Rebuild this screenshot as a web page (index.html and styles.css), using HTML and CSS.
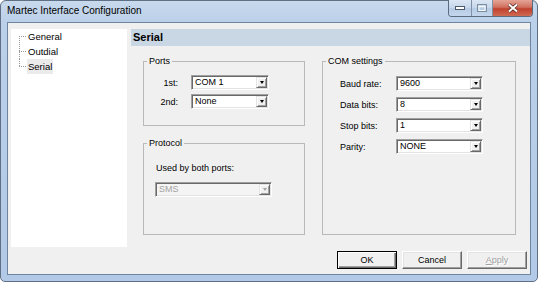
FILE: index.html
```html
<!DOCTYPE html>
<html lang="en">
<head>
    <meta charset="UTF-8">
    <meta name="viewport" content="width=device-width, initial-scale=1.0">
    <title>Martec Interface Configuration</title>
    <link rel="stylesheet" href="styles.css">
</head>
<body>

    <div class="window">
        <div class="titlebar">
            <span class="title">Martec Interface Configuration</span>
            <div class="caption-buttons">
                <div class="cap-btn cap-min">
                    <svg width="10" height="4" viewBox="0 0 10 4"><rect x="0.5" y="0.5" width="9" height="3" fill="#fff" stroke="#4d5a6b"/></svg>
                </div>
                <div class="cap-btn cap-max">
                    <svg width="10" height="8" viewBox="0 0 10 8"><rect x="0.5" y="0.5" width="9" height="7" fill="none" stroke="#7d8da2"/><rect x="2" y="2.5" width="6" height="4" fill="none" stroke="#f4f8fc"/></svg>
                </div>
                <div class="cap-btn cap-close">
                    <svg width="12" height="10" viewBox="0 0 12 10"><path d="M2 1.5 L10 8.5 M10 1.5 L2 8.5" stroke="#5a2a22" stroke-width="3.6"/><path d="M2 1.5 L10 8.5 M10 1.5 L2 8.5" stroke="#fff" stroke-width="2"/></svg>
                </div>
            </div>
        </div>

        <div class="client">
            <div class="main">
                <ul class="tree">
                    <li class="tree-item first"><span class="tree-label">General</span></li>
                    <li class="tree-item"><span class="tree-label">Outdial</span></li>
                    <li class="tree-item last"><span class="tree-label selected">Serial</span></li>
                </ul>

                <div class="page">
                    <div class="page-header">Serial</div>
                    <div class="page-body">
                        <div class="col-left">
                            <fieldset class="group ports">
                                <legend>Ports</legend>
                                <div class="port-row">
                                    <span class="port-label">1st:</span>
                                    <div class="combo port-combo"><span class="combo-text">COM 1</span><span class="combo-arrow"></span></div>
                                </div>
                                <div class="port-row">
                                    <span class="port-label">2nd:</span>
                                    <div class="combo port-combo"><span class="combo-text">None</span><span class="combo-arrow"></span></div>
                                </div>
                            </fieldset>

                            <fieldset class="group protocol">
                                <legend>Protocol</legend>
                                <div class="protocol-body">
                                    <div class="protocol-label">Used by both ports:</div>
                                    <div class="combo protocol-combo disabled"><span class="combo-text">SMS</span><span class="combo-arrow"></span></div>
                                </div>
                            </fieldset>
                        </div>

                        <fieldset class="group com">
                            <legend>COM settings</legend>
                            <div class="com-body">
                                <div class="com-row">
                                    <span class="com-label">Baud rate:</span>
                                    <div class="combo com-combo"><span class="combo-text">9600</span><span class="combo-arrow"></span></div>
                                </div>
                                <div class="com-row">
                                    <span class="com-label">Data bits:</span>
                                    <div class="combo com-combo"><span class="combo-text">8</span><span class="combo-arrow"></span></div>
                                </div>
                                <div class="com-row">
                                    <span class="com-label">Stop bits:</span>
                                    <div class="combo com-combo"><span class="combo-text">1</span><span class="combo-arrow"></span></div>
                                </div>
                                <div class="com-row">
                                    <span class="com-label">Parity:</span>
                                    <div class="combo com-combo"><span class="combo-text">NONE</span><span class="combo-arrow"></span></div>
                                </div>
                            </div>
                        </fieldset>
                    </div>
                </div>
            </div>

            <div class="buttons">
                <button class="btn btn-default">OK</button>
                <button class="btn">Cancel</button>
                <button class="btn" disabled><u>A</u>pply</button>
            </div>
        </div>
    </div>

</body>
</html>
```

FILE: styles.css
```css
body {
    margin: 0;
    background-color: #fff;
    font-family: "Liberation Sans", Arial, sans-serif;
    font-size: 9px;
    color: #000;
}

.window {
    width: 538px;
    height: 282px;
    box-sizing: border-box;
    border: 1px solid #5e6f86;
    border-radius: 6px 6px 5px 5px;
    background: linear-gradient(to bottom, #c8d9ec, #bbd0e9 22px, #b2cae7);
    padding: 0 6px 6px;
    display: flex;
    flex-direction: column;
}

/* title bar */
.titlebar {
    height: 21px;
    flex: none;
    display: flex;
}

.title {
    font-size: 10px;
    line-height: 20px;
    color: #000;
}

.caption-buttons {
    margin: -1px -2px 0 auto;
    height: 17px;
    display: flex;
    box-sizing: border-box;
    border: 1px solid #5b6b80;
    border-top: none;
    border-radius: 0 0 4px 4px;
    overflow: hidden;
}

.cap-btn {
    display: flex;
    align-items: center;
    justify-content: center;
    background: linear-gradient(to bottom, #dbe6f3, #c5d6ea 50%, #b6cbe4 51%, #c3d6ec);
}

.cap-min {
    width: 22px;
    border-right: 1px solid #7f90a6;
}

.cap-max {
    width: 20px;
    border-right: 1px solid #7f90a6;
}

.cap-close {
    width: 39px;
    background: linear-gradient(to bottom, #e5a496, #d0705f 45%, #c0412e 55%, #cf6a52);
}

/* client area */
.client {
    flex: 1;
    border: 1px solid #6f849f;
    background-color: #f0f0f0;
    padding: 6px 0 0 3px;
    display: flex;
    flex-direction: column;
}

.main {
    display: flex;
    gap: 4px;
    height: 218px;
}

.tree {
    width: 116px;
    flex: none;
    margin: 0;
    padding: 0 0 0 8px;
    box-sizing: border-box;
    list-style: none;
    background-color: #fff;
    font-size: 9.5px;
}

.tree-item {
    display: flex;
    height: 15px;
    line-height: 15px;
}

.tree-item::before {
    content: "";
    width: 8px;
    flex: none;
    background:
        repeating-linear-gradient(to right, #9a9a9a 0 1px, transparent 1px 2px) 0 7px / 7px 1px no-repeat,
        repeating-linear-gradient(to bottom, #9a9a9a 0 1px, transparent 1px 2px) 0 0 / 1px 15px no-repeat;
}

.tree-item.first::before {
    background:
        repeating-linear-gradient(to right, #9a9a9a 0 1px, transparent 1px 2px) 0 7px / 7px 1px no-repeat,
        repeating-linear-gradient(to bottom, #9a9a9a 0 1px, transparent 1px 2px) 0 7px / 1px 8px no-repeat;
}

.tree-item.last::before {
    background:
        repeating-linear-gradient(to right, #9a9a9a 0 1px, transparent 1px 2px) 0 7px / 7px 1px no-repeat,
        repeating-linear-gradient(to bottom, #9a9a9a 0 1px, transparent 1px 2px) 0 0 / 1px 8px no-repeat;
}

.tree-label {
    padding: 0 1px;
}

.tree-label.selected {
    background-color: #ebebeb;
}

.page {
    flex: 1;
}

.page-header {
    height: 17px;
    line-height: 17px;
    padding-left: 2px;
    background-color: #c9d6e4;
    font-size: 11px;
    font-weight: bold;
}

.page-body {
    display: flex;
    gap: 17px;
    padding: 10px 0 0 12px;
}

/* group boxes */
.group {
    margin: 0;
    padding: 0;
    min-width: 0;
    box-sizing: border-box;
    border: 1px solid #b9b9b9;
}

.group legend {
    margin-left: 3px;
    padding: 0 2px;
    line-height: 11px;
}

.ports {
    width: 162px;
    height: 70px;
    padding-top: 8px;
}

.port-row {
    display: flex;
    align-items: center;
    margin-bottom: 4px;
}

.port-label {
    width: 47px;
    padding-right: 13px;
    box-sizing: border-box;
    text-align: right;
}

.port-combo {
    width: 78px;
}

.protocol {
    width: 162px;
    height: 97px;
    margin-top: 12px;
}

.protocol-body {
    padding: 14px 0 0 11px;
}

.protocol-label {
    line-height: 11px;
    padding-left: 1px;
}

.protocol-combo {
    width: 117px;
    margin-top: 8px;
}

.com {
    width: 194px;
    height: 179px;
}

.com-body {
    padding: 9px 0 0 17px;
}

.com-row {
    display: flex;
    align-items: center;
    margin-bottom: 6px;
}

.com-label {
    width: 56px;
}

.com-combo {
    width: 87px;
}

/* combo boxes */
.combo {
    height: 15px;
    box-sizing: border-box;
    display: flex;
    border: 1px solid;
    border-color: #a0a0a0 #fff #fff #a0a0a0;
    box-shadow: inset 1px 1px #696969, inset -1px -1px #e3e3e3;
    background-color: #fff;
    padding: 1px;
}

.combo-text {
    flex: 1;
    line-height: 11px;
    padding-left: 2px;
}

.combo-arrow {
    width: 11px;
    box-sizing: border-box;
    display: flex;
    align-items: center;
    justify-content: center;
    background-color: #f0f0f0;
    border: 1px solid;
    border-color: #e3e3e3 #696969 #696969 #e3e3e3;
    box-shadow: inset 1px 1px #fff, inset -1px -1px #a0a0a0;
}

.combo-arrow::after {
    content: "";
    border-left: 2.5px solid transparent;
    border-right: 2.5px solid transparent;
    border-top: 3px solid #000;
}

.combo.disabled {
    background-color: #f4f4f4;
    color: #a3a3a3;
}

.combo.disabled .combo-arrow::after {
    border-top-color: #a3a3a3;
}

/* dialog buttons */
.buttons {
    display: flex;
    justify-content: flex-end;
    gap: 5px;
    margin-top: 4px;
    padding-right: 3px;
}

.btn {
    width: 60px;
    height: 18px;
    padding: 0;
    font-family: "Liberation Sans", Arial, sans-serif;
    font-size: 9px;
    color: #000;
    background-color: #f0f0f0;
    border: 1px solid;
    border-color: #fff #696969 #696969 #fff;
    box-shadow: inset -1px -1px #a0a0a0, inset 1px 1px #e3e3e3;
}

.btn-default {
    border-color: #000;
    box-shadow: inset 1px 1px #fff, inset -1px -1px #696969, inset -2px -2px #a0a0a0;
}

.btn:disabled {
    color: #a0a0a0;
    text-shadow: 1px 1px #fff;
}
```
